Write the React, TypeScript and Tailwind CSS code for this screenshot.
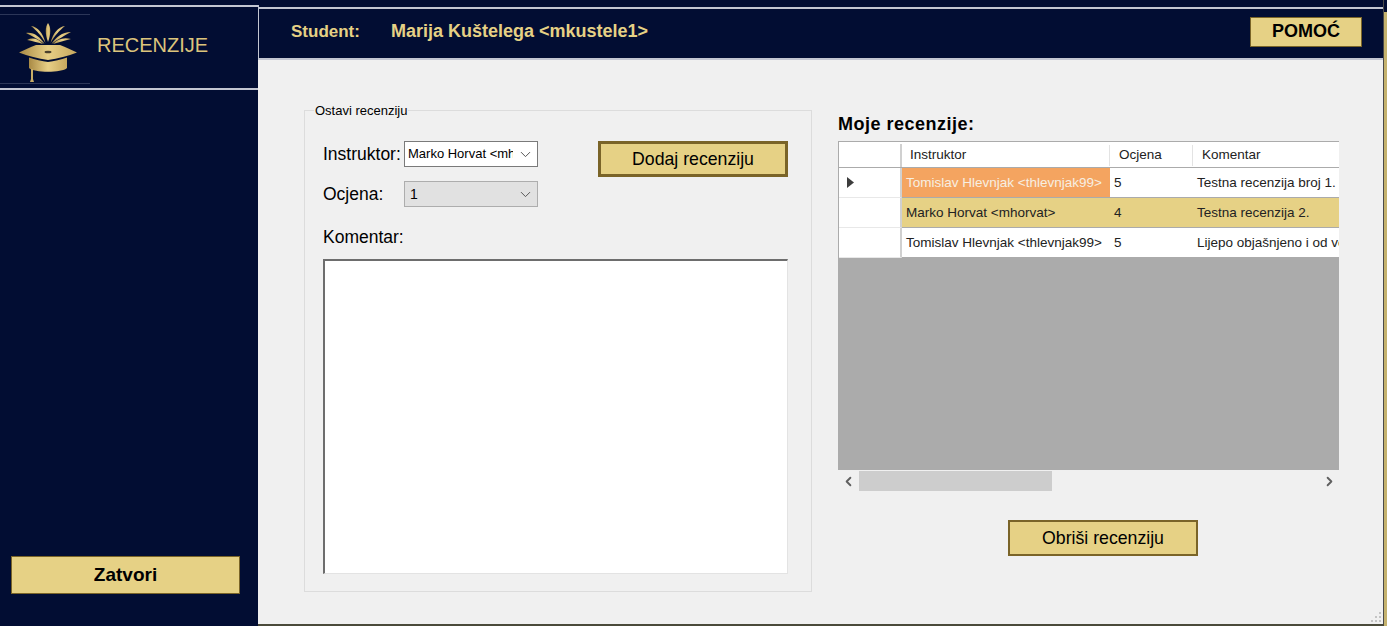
import { ChevronDown, ChevronLeft, ChevronRight } from "lucide-react";

const rows = [
  { instruktor: "Tomislav Hlevnjak <thlevnjak99>", ocjena: "5", komentar: "Testna recenzija broj 1.", tone: "bg-white", current: true },
  { instruktor: "Marko Horvat <mhorvat>", ocjena: "4", komentar: "Testna recenzija 2.", tone: "bg-[#e6d185]", current: false },
  { instruktor: "Tomislav Hlevnjak <thlevnjak99>", ocjena: "5", komentar: "Lijepo objašnjeno i od velike pomoći", tone: "bg-white", current: false },
];

const Logo = () => (
  <svg viewBox="0 0 90 70" className="mt-[2px] h-[70px] w-[90px] shrink-0">
    <defs>
      <linearGradient id="gold" x1="0" y1="0" x2="1" y2="0">
        <stop offset="0" stopColor="#a98a45" />
        <stop offset="0.5" stopColor="#e8cf86" />
        <stop offset="1" stopColor="#c6a75e" />
      </linearGradient>
    </defs>
    <path d="M0 0.5H90M0 69.5H90" stroke="#2c3658" strokeWidth="1" />
    <path d="M48 9C51 13 51 20 48 28C45 20 45 13 48 9Z" fill="url(#gold)" />
    <path d="M31 12C38 13 43 19 45.500 29C41 21 37 17 31 12Z" fill="url(#gold)" />
    <path d="M26 19C34 18 40 23 44.500 30C38 25 32 22 26 19Z" fill="url(#gold)" />
    <path d="M27 26C33 23 39 25 43 30C37 28 32 27 27 26Z" fill="url(#gold)" />
    <path d="M65 12C58 13 53 19 50.500 29C55 21 59 17 65 12Z" fill="url(#gold)" />
    <path d="M71 18C62 18 56 23 51.500 30C58 25 64 22 71 18Z" fill="url(#gold)" />
    <path d="M71 25C64 23 57 25 53 30C59 28 64 27 71 25Z" fill="url(#gold)" />
    <path d="M19 38.500C26 35 31 33 36 31H60C65 33 70 35 77 38.500C68 42 58 44.500 48 46C38 44.500 28 42 19 38.500Z" fill="url(#gold)" />
    <ellipse cx="48" cy="38" rx="3.500" ry="1.300" fill="#4a3f2c" />
    <path d="M29 43.500C35 45.500 42 47 48 48C54 47 61 45.500 67 43.500V54C62 59 34 59 29 54Z" fill="url(#gold)" />
    <path d="M31 55H33V65L34 68H30L31 65Z" fill="#c9ad66" />
  </svg>
);

const Combo = ({ value, disabled }: { value: string; disabled?: boolean }) => (
  <div
    className={
      disabled
        ? "flex h-[26px] w-[134px] items-center justify-between border border-[#adadad] bg-[#e1e1e1] pl-[5px] pr-[3px] text-[14px] text-black"
        : "flex h-[26px] w-[134px] items-center justify-between border border-[#7a7a7a] bg-white pl-[3px] pr-[3px] text-[13px] text-black"
    }
  >
    <span className="w-[105px] overflow-hidden whitespace-nowrap">{value}</span>
    <ChevronDown size={17} strokeWidth={1.4} className="text-[#555555]" />
  </div>
);

export default function App() {
  return (
    <div className="relative flex h-[626px] w-[1387px] overflow-hidden bg-[#020d33] font-['Liberation_Sans',sans-serif] text-black">
      {/* sidebar */}
      <aside className="flex w-[258px] shrink-0 flex-col pt-[5px]">
        <div className="flex h-[85px] w-[259px] items-center border-y-2 border-r border-[#c3c6d2]">
          <Logo />
          <span className="mb-[6px] ml-[7px] text-[20px] text-[#dcc47c]">RECENZIJE</span>
        </div>
        <div className="flex-1" />
        <button className="mx-[11px] mb-[32px] h-[38px] w-[229px] border border-[#7a6428] bg-[#e6d185] text-[19px] font-bold">
          Zatvori
        </button>
      </aside>

      <div className="flex min-w-0 flex-1 flex-col">
        {/* header */}
        <header className="mt-[7px] flex h-[53px] w-[1125px] items-center border-y-2 border-[#c3c6d2] pb-[4px] pl-[33px] pr-[21px] font-bold text-[#e6d185]">
          <span className="w-[100px] text-[17px]">Student:</span>
          <span className="text-[18px]">Marija Kuštelega &lt;mkustele1&gt;</span>
          <button className="ml-auto h-[30px] w-[112px] border border-[#7a6428] bg-[#e6d185] text-[18px] font-bold text-black">
            POMOĆ
          </button>
        </header>

        {/* content */}
        <main className="mb-[2px] flex min-h-0 w-[1125px] flex-1 bg-[#f0f0f0]">
          <fieldset className="ml-[46px] mt-[43px] h-[489px] w-[508px] border border-[#dcdcdc] pl-[18px] pr-[22px]">
            <legend className="ml-[-9px] px-[1px] text-[13px] leading-[15px]">Ostavi recenziju</legend>
            <div className="mt-[23px] flex">
              <div className="flex flex-col gap-[14px]">
                <div className="flex items-center">
                  <span className="w-[81px] text-[17.5px]">Instruktor:</span>
                  <Combo value="Marko Horvat <mhorvat>" />
                </div>
                <div className="flex items-center">
                  <span className="w-[81px] text-[17.5px]">Ocjena:</span>
                  <Combo value="1" disabled />
                </div>
              </div>
              <button className="ml-[60px] h-[36px] w-[190px] border-[3px] border-[#7a6428] bg-[#e6d185] text-[17.7px]">
                Dodaj recenziju
              </button>
            </div>
            <p className="mt-[20px] text-[17.5px] leading-[18px]">Komentar:</p>
            <div className="mt-[13px] h-[315px] w-[465px] border-b border-l-2 border-r border-t-2 border-b-[#e3e3e3] border-l-[#6d6d6d] border-r-[#e3e3e3] border-t-[#6d6d6d] bg-white" />
          </fieldset>

          <section className="ml-[26px] mt-[53px] w-[501px]">
            <h2 className="mt-[2px] text-[18px] font-bold leading-[18px] tracking-[0.5px]">Moje recenzije:</h2>
            <div className="mt-[8px] h-[329px] overflow-hidden bg-[#ababab] pl-[1px]">
              <div className="grid h-[27px] grid-cols-[63px_208px_83px_146px] items-center border-b border-t border-[#ababab] bg-white pt-[2px] text-[13.5px] text-[#222222]">
                <div className="h-full border-r-2 border-[#d0d0d0]" />
                <div className="border-r border-[#e3e3e3] pl-[8px]">Instruktor</div>
                <div className="border-r border-[#e3e3e3] pl-[9px]">Ocjena</div>
                <div className="pl-[9px]">Komentar</div>
              </div>
              {rows.map((row) => (
                <div
                  key={row.instruktor + row.ocjena + row.komentar}
                  className="grid h-[30px] grid-cols-[63px_437px] text-[13.5px] text-[#222222]"
                >
                  <div className="flex items-center border-b border-r-2 border-b-[#e8e8e8] border-r-[#d0d0d0] bg-white pl-[8px]">
                    {row.current && (
                      <svg viewBox="0 0 7 11" className="h-[11px] w-[7px]">
                        <path d="M0 0L7 5.500L0 11Z" fill="#3c3c3c" />
                      </svg>
                    )}
                  </div>
                  <div className={"grid grid-cols-[208px_83px_146px] items-center border-b border-[#ababab] " + row.tone}>
                    <div
                      className={
                        row.current
                          ? "flex h-full items-center whitespace-nowrap bg-[#f4a460] pl-[4px] pt-[1px] text-[#f7efe2]"
                          : "whitespace-nowrap pl-[4px] pt-[1px]"
                      }
                    >
                      {row.instruktor}
                    </div>
                    <div className="pl-[4px] pt-[1px]">{row.ocjena}</div>
                    <div className="overflow-hidden whitespace-nowrap pl-[4px] pt-[1px]">{row.komentar}</div>
                  </div>
                </div>
              ))}
            </div>
            <div className="mt-[1px] flex h-[20px] items-center">
              <ChevronLeft size={15} strokeWidth={3} className="ml-[3px] text-[#606060]" />
              <div className="ml-[3px] h-[20px] w-[193px] bg-[#cdcdcd]" />
              <ChevronRight size={15} strokeWidth={3} className="ml-auto mr-[2px] text-[#606060]" />
            </div>
            <div className="mt-[29px] flex justify-center">
              <button className="ml-[29px] h-[36px] w-[190px] border-2 border-[#7a6428] bg-[#e6d185] text-[17.7px]">
                Obriši recenziju
              </button>
            </div>
          </section>
        </main>
      </div>

      {/* window edge and resize grip */}
      <div className="absolute right-0 top-[12px] h-[614px] w-[3px] bg-[#c5b26e]" />
      <div className="absolute right-[3px] top-0 h-[626px] w-[1px] bg-[#4a4a4a]" />
      <div className="absolute bottom-0 left-[258px] h-[2px] w-[1126px] bg-[#4a4a3a]" />
      <svg viewBox="0 0 12 12" className="absolute bottom-[3px] right-[5px] h-[12px] w-[12px]">
        <path d="M9 1h2v2H9zM5 5h2v2H5zM9 5h2v2H9zM1 9h2v2H1zM5 9h2v2H5zM9 9h2v2H9z" fill="#c4c4c4" />
      </svg>
    </div>
  );
}
